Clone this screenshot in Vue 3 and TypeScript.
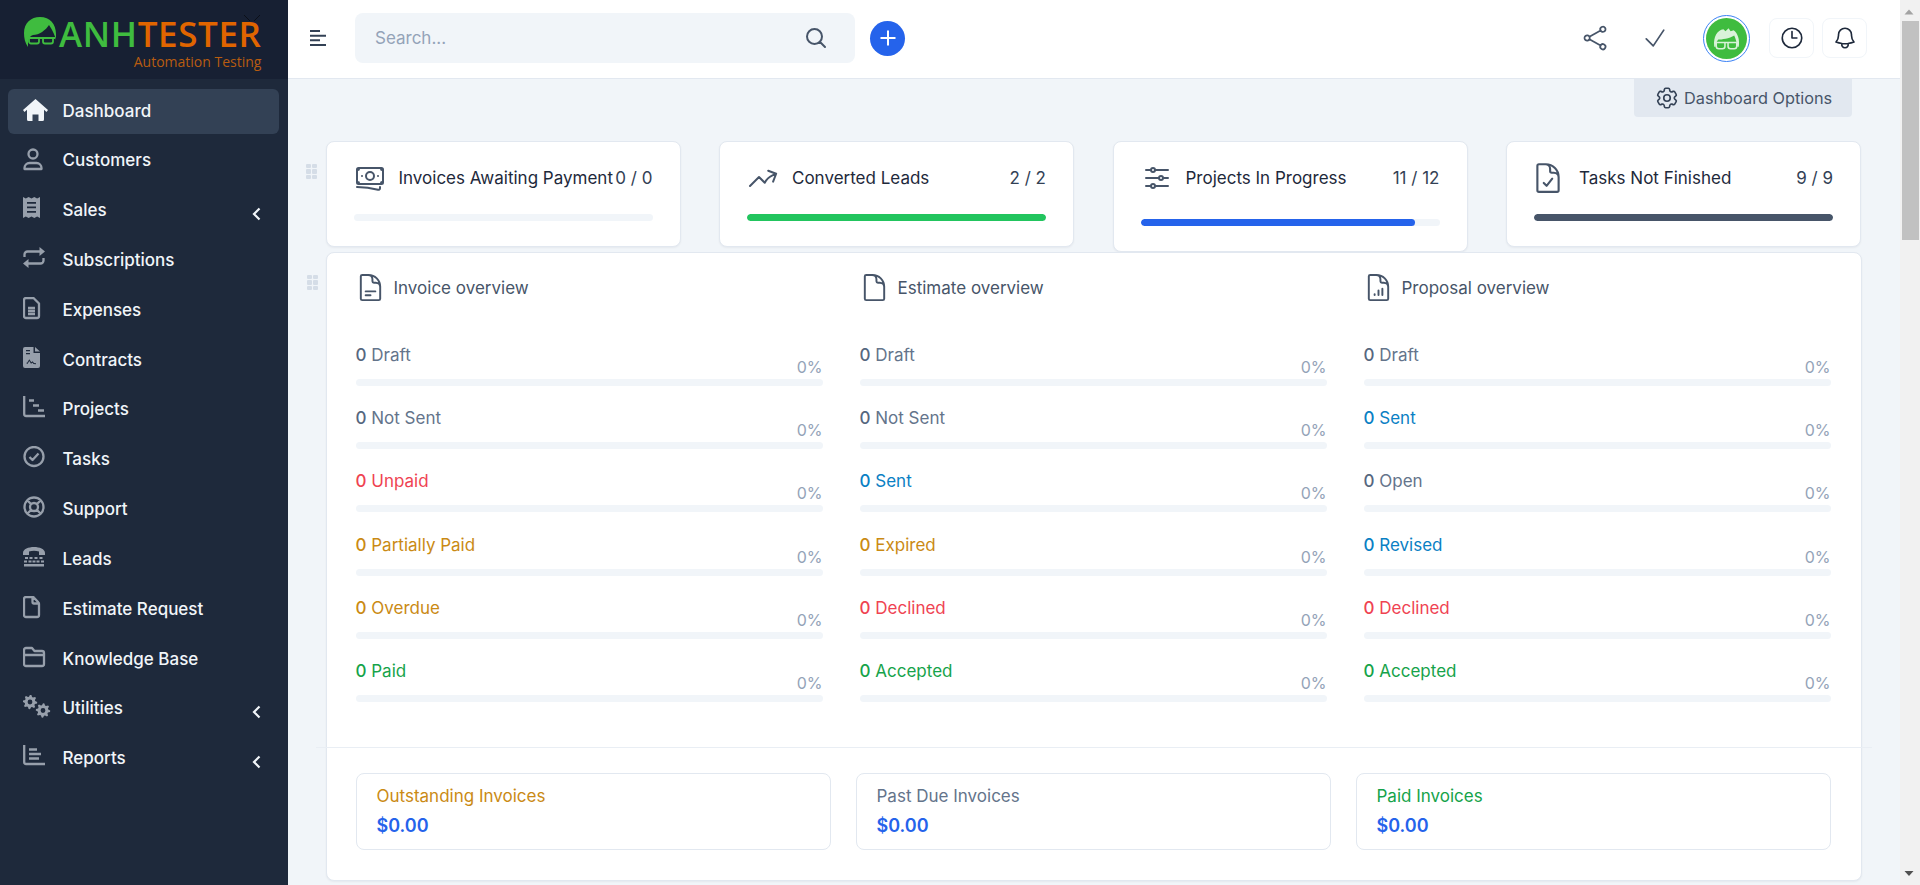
<template>
  <div class="app">
    <aside class="sidebar">
      <div class="brand">
        <svg class="brand-head" width="34" height="32" viewBox="0 0 34 32">
          <path class="head-hair" d="M0 17C0 7 7 1 16 1c10 0 16 7 16 17v6c-1-4-3-9-7-15-3 5-10 10-16 10-3 1-5 4-5 8v4C1 27 0 22 0 17z" />
          <path class="head-glass" d="M4 22h27M5 22h10v3.500a2 2 0 0 1-2 2H7a2 2 0 0 1-2-2zM19 22h10v3.500a2 2 0 0 1-2 2h-6a2 2 0 0 1-2-2z" />
        </svg>
        <div class="brand-text">
          <div class="brand-name"><span class="green">ANH</span><span class="orange">TESTER</span></div>
          <div class="brand-sub">Automation Testing</div>
        </div>
        <svg class="brand-bug" width="22" height="12" viewBox="0 0 22 12">
          <path d="M9 7 3 1M13 7l6-6" />
        </svg>
      </div>
      <nav class="menu">
        <a v-for="item in menu" :key="item.label" class="menu-item" :class="{ active: item.active }">
          <svg class="menu-icon" width="28" height="28" viewBox="0 0 28 28">
            <path v-if="item.fill" class="i-fill" fill-rule="evenodd" :d="item.fill" />
            <path v-if="item.stroke" class="i-stroke" :d="item.stroke" />
          </svg>
          <span class="menu-label">{{ item.label }}</span>
          <svg v-if="item.sub" class="chevron" width="9" height="14" viewBox="0 0 9 14">
            <path d="M7.500 1.500 2 7l5.500 5.500" />
          </svg>
        </a>
      </nav>
    </aside>

    <div class="main">
      <header class="topbar">
        <svg class="burger" width="16" height="16" viewBox="0 0 16 16">
          <path d="M0 1h10M0 5.700h16M0 10.300h10M0 15h16" />
        </svg>
        <div class="search">
          <span class="search-text">Search...</span>
          <svg class="hero search-icon" width="24" height="24" viewBox="0 0 24 24">
            <path :d="icons.search" />
          </svg>
        </div>
        <button class="plus">
          <svg width="20" height="20" viewBox="0 0 20 20"><path d="M10 2.500v15M2.500 10h15" /></svg>
        </button>
        <div class="top-right">
          <svg class="hero top-icon share" width="28" height="28" viewBox="0 0 24 24"><path :d="icons.share" /></svg>
          <svg class="hero top-icon check" width="28" height="28" viewBox="0 0 24 24"><path :d="icons.check" /></svg>
          <div class="avatar">
            <svg width="41" height="41" viewBox="0 0 40 40">
              <circle class="avatar-bg" cx="20" cy="20" r="20" />
              <path class="avatar-hair" d="M8 28C7 18 11 12 17 11l2 2 3-3 2 3 3-1c4 3 6 9 5 16h-1.500c-.5-4-1.500-8-3-11-4.500 3-12.500 4-15.500 4-2 2-2.500 5-2.500 7z" />
              <path class="avatar-glass" d="M8 24h24M10 24h8.500v3.500a2.500 2.500 0 0 1-2.500 2.500h-3.500a2.500 2.500 0 0 1-2.500-2.500zM21.500 24H30v3.500a2.500 2.500 0 0 1-2.500 2.500H24a2.500 2.500 0 0 1-2.500-2.500z" />
            </svg>
          </div>
          <div class="round-box">
            <svg class="hero dark" width="26" height="26" viewBox="0 0 24 24"><path :d="icons.clock" /></svg>
          </div>
          <div class="round-box">
            <svg class="hero dark" width="26" height="26" viewBox="0 0 24 24"><path :d="icons.bell" /></svg>
          </div>
        </div>
      </header>

      <div class="options-row">
        <button class="options">
          <svg class="hero options-icon" width="26" height="26" viewBox="0 0 24 24"><path :d="icons.cog" /></svg>
          Dashboard Options
        </button>
      </div>

      <section class="content">
        <div class="top-cards">
          <span class="drag drag-top"><i v-for="n in 6" :key="n" /></span>
          <div v-for="card in cards" :key="card.title" class="stat-card" :class="{ tall: card.tall, doc: card.doc }">
            <div class="stat-head">
              <span class="stat-icon">
                <svg class="hero card-icon" :width="card.size" :height="card.size" viewBox="0 0 24 24"><path :d="card.icon" /></svg>
              </span>
              <span class="stat-title">{{ card.title }}</span>
              <span class="stat-value">{{ card.value }}</span>
            </div>
            <div class="track"><div class="fill" :class="card.color" :style="{ width: card.pct + '%' }" /></div>
          </div>
        </div>

        <div class="overview">
          <span class="drag drag-over"><i v-for="n in 6" :key="n" /></span>
          <div class="columns">
            <div v-for="col in overview" :key="col.title" class="column">
              <div class="col-title">
                <svg class="hero col-icon" width="31" height="31" viewBox="0 0 24 24"><path :d="col.icon" /></svg>
                {{ col.title }}
              </div>
              <div v-for="row in col.rows" :key="row.label" class="row">
                <span class="row-label" :class="row.tone"><b>0</b> {{ row.label }}</span>
                <span class="row-pct">0%</span>
                <div class="track row-track" />
              </div>
            </div>
          </div>
          <hr class="divider" />
          <div class="totals">
            <div v-for="t in totals" :key="t.label" class="total">
              <div class="total-label" :class="t.tone">{{ t.label }}</div>
              <div class="total-value">$0.00</div>
            </div>
          </div>
        </div>
      </section>
    </div>

    <div class="scrollbar">
      <svg class="arrow" width="20" height="17" viewBox="0 0 20 17"><path d="M9 9.500l4.500 5h-9z" /></svg>
      <div class="thumb" />
      <svg class="arrow bottom" width="20" height="17" viewBox="0 0 20 17"><path d="M9 8l4.500-5h-9z" /></svg>
    </div>
  </div>
</template>

<script setup lang="ts">
interface MenuItem {
  label: string
  fill?: string
  stroke?: string
  sub?: boolean
  active?: boolean
}

// builds a small gear with a hole, for the Utilities icon
function gear(cx: number, cy: number, r: number, hole: number): string {
  const pts: string[] = []
  const teeth = 8
  for (let i = 0; i < teeth * 4; i++) {
    const a = (i / (teeth * 4)) * Math.PI * 2
    const rad = i % 4 < 2 ? r : r * 0.74
    pts.push(`${(cx + Math.cos(a) * rad).toFixed(2)} ${(cy + Math.sin(a) * rad).toFixed(2)}`)
  }
  return (
    `M${pts.join('L')}Z` +
    `M${cx - hole} ${cy}a${hole} ${hole} 0 1 0 ${hole * 2} 0a${hole} ${hole} 0 1 0 ${-hole * 2} 0Z`
  )
}

const menu: MenuItem[] = [
  {
    label: 'Dashboard',
    active: true,
    fill: 'M12.500 1 25 12l-1.500 2L21 11.800V21.500a1.500 1.500 0 0 1-1.500 1.500H15.500V16.500H9.500V23H5.500A1.500 1.500 0 0 1 4 21.500V11.800L1.500 14 0 12Z',
  },
  {
    label: 'Customers',
    stroke: 'M14.500 7a4.500 4.500 0 1 1-9 0 4.500 4.500 0 0 1 9 0ZM1.500 22v-1a5 5 0 0 1 5-5h7a5 5 0 0 1 5 5v1Z',
  },
  {
    label: 'Sales',
    sub: true,
    fill: 'M0 0 2.800 1.500 5.600 0 8.500 1.500 11.300 0 14.100 1.500 17 0V21L14.100 19.500 11.300 21 8.500 19.500 5.600 21 2.800 19.500 0 21ZM4 5v1.700h9V5ZM4 9.500v1.700h9V9.500ZM4 14v1.700h9V14Z',
  },
  {
    label: 'Subscriptions',
    fill: 'M16.500 0 22 4.500 16.500 9ZM5.500 12 0 16.500 5.500 21Z',
    stroke: 'M1.500 10V7.500a3 3 0 0 1 3-3H17M20.500 11v2.500a3 3 0 0 1-3 3H5',
  },
  {
    label: 'Expenses',
    stroke: 'M3 1h7.500L16 6.500V19a2 2 0 0 1-2 2H3a2 2 0 0 1-2-2V3a2 2 0 0 1 2-2ZM5 11h7M5 14h7M5 17h7',
  },
  {
    label: 'Contracts',
    fill: 'M2 0H10.500V6H17V19a2 2 0 0 1-2 2H2a2 2 0 0 1-2-2V2a2 2 0 0 1 2-2ZM3 3v1.300H7V3ZM3 6v1.300H7V6ZM3.500 16.500l1 .6 1.800-3 1.700 2.600 1.500-1 1 1.300 2.500.2v-1l-2-.2-1.400-1.700-1.300.9-2-3-2.200 3.600-.4-.3ZM12 0 17 4.500H12Z',
  },
  {
    label: 'Projects',
    stroke: 'M1.200 0V18a2 2 0 0 0 2 2H22M6 4.500h5M10 9.500h6M15 14.500h6',
  },
  {
    label: 'Tasks',
    stroke: 'M20.500 10.500a9.500 9.500 0 1 1-19 0 9.500 9.500 0 0 1 19 0ZM6.500 11l3 3 6-6.500',
  },
  {
    label: 'Support',
    stroke: 'M20.500 11a9.500 9.500 0 1 1-19 0 9.500 9.500 0 0 1 19 0ZM15 11a4 4 0 1 1-8 0 4 4 0 0 1 8 0ZM4.500 4.500 8 8M17.500 4.500 14 8M4.500 17.500 8 14M17.500 17.500 14 14',
  },
  {
    label: 'Leads',
    fill: 'M0 7C0 -1 22 -1 22 7v2h-6V5.500c-3-1-7-1-10 0V9H0ZM2 11h3v2H2ZM6.500 11h3v2h-3ZM11.500 11h3v2h-3ZM16.500 11h3v2h-3ZM1 14.500h3v2H1ZM5.500 14.500h3v2h-3ZM9.500 14.500h3v2h-3ZM13.500 14.500h3v2h-3ZM18 14.500h3v2h-3ZM1 18h20v2.500H1Z',
  },
  {
    label: 'Estimate Request',
    stroke: 'M3 1h6.500a2 2 0 0 1 1.500.7l4.300 4.600a2 2 0 0 1 .7 1.500V19a2 2 0 0 1-2 2H3a2 2 0 0 1-2-2V3a2 2 0 0 1 2-2ZM9.500 1v5a1.500 1.500 0 0 0 1.500 1.500h5',
  },
  {
    label: 'Knowledge Base',
    stroke: 'M3 2h6l2.500 3H19a2 2 0 0 1 2 2v11a2 2 0 0 1-2 2H3a2 2 0 0 1-2-2V4a2 2 0 0 1 2-2ZM1 9h20',
  },
  {
    label: 'Utilities',
    sub: true,
    fill: gear(7, 7, 7.2, 2.4) + gear(20, 15.5, 7.2, 2.4),
  },
  {
    label: 'Reports',
    sub: true,
    stroke: 'M1.200 0V17a2 2 0 0 0 2 2H22M6 4.500h8M6 9h12M6 13.500h10',
  },
]

const docBase =
  'M19.500 14.250v-2.625a3.375 3.375 0 0 0-3.375-3.375h-1.500A1.125 1.125 0 0 1 13.500 7.125v-1.500a3.375 3.375 0 0 0-3.375-3.375H8.250m2.250 0H5.625c-.621 0-1.125.504-1.125 1.125v17.250c0 .621.504 1.125 1.125 1.125h12.750c.621 0 1.125-.504 1.125-1.125V11.250a9 9 0 0 0-9-9z'

const icons = {
  search: 'M21 21l-5.197-5.197m0 0A7.500 7.500 0 1 0 5.196 5.196a7.500 7.500 0 0 0 10.607 10.607z',
  share:
    'M7.217 10.907a2.250 2.250 0 1 0 0 2.186m0-2.186c.18.324.283.696.283 1.093s-.103.77-.283 1.093m0-2.186l9.566-5.314m-9.566 7.500l9.566 5.314m0 0a2.250 2.250 0 1 0 3.935 2.186 2.250 2.250 0 0 0-3.935-2.186zm0-12.814a2.250 2.250 0 1 0 3.933-2.185 2.250 2.250 0 0 0-3.933 2.185z',
  check: 'M4.500 12.750l6 6 9-13.500',
  clock: 'M12 6v6h4.500m4.500 0a9 9 0 1 1-18 0 9 9 0 0 1 18 0z',
  bell: 'M14.857 17.082a23.848 23.848 0 0 0 5.454-1.310A8.967 8.967 0 0 1 18 9.750v-.7V9A6 6 0 0 0 6 9v.750a8.967 8.967 0 0 1-2.312 6.022c1.733.64 3.560 1.085 5.455 1.310m5.714 0a24.255 24.255 0 0 1-5.714 0m5.714 0a3 3 0 1 1-5.714 0',
  cog: 'M9.594 3.940c.09-.542.56-.94 1.110-.94h2.593c.55 0 1.020.398 1.110.94l.213 1.281c.063.374.313.686.645.87.074.04.147.083.22.127.324.196.72.257 1.075.124l1.217-.456a1.125 1.125 0 0 1 1.370.49l1.296 2.247a1.125 1.125 0 0 1-.26 1.431l-1.003.827c-.293.24-.438.613-.431.992a6.759 6.759 0 0 1 0 .255c-.007.378.138.75.43.99l1.005.828c.424.35.534.954.26 1.430l-1.298 2.247a1.125 1.125 0 0 1-1.369.491l-1.217-.456c-.355-.133-.75-.072-1.076.124a6.570 6.570 0 0 1-.22.128c-.331.183-.581.495-.644.869l-.213 1.280c-.09.543-.56.941-1.110.941h-2.594c-.55 0-1.020-.398-1.110-.94l-.213-1.281c-.062-.374-.312-.686-.644-.87a6.520 6.520 0 0 1-.22-.127c-.325-.196-.72-.257-1.076-.124l-1.217.456a1.125 1.125 0 0 1-1.369-.49l-1.297-2.247a1.125 1.125 0 0 1 .26-1.431l1.004-.827c.292-.24.437-.613.43-.992a6.932 6.932 0 0 1 0-.255c.007-.378-.138-.75-.43-.99l-1.004-.828a1.125 1.125 0 0 1-.26-1.430l1.297-2.247a1.125 1.125 0 0 1 1.370-.491l1.216.456c.356.133.751.072 1.076-.124.072-.044.146-.087.22-.128.332-.183.582-.495.644-.869l.214-1.281zM15 12a3 3 0 1 1-6 0 3 3 0 0 1 6 0z',
}

const cards = [
  {
    title: 'Invoices Awaiting Payment',
    value: '0 / 0',
    pct: 0,
    color: 'gray',
    size: 32,
    icon: 'M2.250 18.750a60.070 60.070 0 0 1 15.797 2.101c.727.198 1.453-.342 1.453-1.096V18.750M3.750 4.500v.75A.75.75 0 0 1 3 6h-.75m0 0v-.375c0-.621.504-1.125 1.125-1.125H20.250M2.250 6v9m18-10.500v.75c0 .414.336.75.75.75h.75m-1.500-1.500h.375c.621 0 1.125.504 1.125 1.125v9.750c0 .621-.504 1.125-1.125 1.125h-.375m1.500-1.500H21a.75.75 0 0 0-.75.75v.75m0 0H3.750m0 0h-.375a1.125 1.125 0 0 1-1.125-1.125V15m1.500 1.500v-.75A.75.75 0 0 0 3 15h-.75M15 10.500a3 3 0 1 1-6 0 3 3 0 0 1 6 0zm3 0h.008v.008H18V10.500zm-12 0h.008v.008H6V10.500z',
  },
  {
    title: 'Converted Leads',
    value: '2 / 2',
    pct: 100,
    color: 'green',
    size: 32,
    icon: 'M2.250 18L9 11.250l4.306 4.307a11.950 11.950 0 0 1 5.814-5.519l2.740-1.220m0 0l-5.940-2.280m5.940 2.280l-2.280 5.941',
  },
  {
    title: 'Projects In Progress',
    value: '11 / 12',
    pct: 91.67,
    color: 'blue',
    size: 32,
    tall: true,
    icon: 'M10.500 6h9.750M10.500 6a1.500 1.500 0 1 1-3 0m3 0a1.500 1.500 0 1 0-3 0M3.750 6H7.500m3 12h9.750m-9.750 0a1.500 1.500 0 0 1-3 0m3 0a1.500 1.500 0 0 0-3 0m-3.750 0H7.500m9-6h3.750m-3.750 0a1.500 1.500 0 0 1-3 0m3 0a1.500 1.500 0 0 0-3 0m-9.750 0h9.750',
  },
  {
    title: 'Tasks Not Finished',
    value: '9 / 9',
    pct: 100,
    color: 'slate',
    size: 34,
    doc: true,
    icon: docBase + 'M9 15.500l2 2 4-5',
  },
]

const overview = [
  {
    title: 'Invoice overview',
    icon: docBase + 'M8.250 15h7.500M8.250 18H12',
    rows: [
      { label: 'Draft', tone: 'muted' },
      { label: 'Not Sent', tone: 'muted' },
      { label: 'Unpaid', tone: 'danger' },
      { label: 'Partially Paid', tone: 'warning' },
      { label: 'Overdue', tone: 'warning' },
      { label: 'Paid', tone: 'success' },
    ],
  },
  {
    title: 'Estimate overview',
    icon: docBase,
    rows: [
      { label: 'Draft', tone: 'muted' },
      { label: 'Not Sent', tone: 'muted' },
      { label: 'Sent', tone: 'info' },
      { label: 'Expired', tone: 'warning' },
      { label: 'Declined', tone: 'danger' },
      { label: 'Accepted', tone: 'success' },
    ],
  },
  {
    title: 'Proposal overview',
    icon: docBase + 'M9 17.250v.5m3-3.500v3.500M15 13v4.750',
    rows: [
      { label: 'Draft', tone: 'muted' },
      { label: 'Sent', tone: 'info' },
      { label: 'Open', tone: 'muted' },
      { label: 'Revised', tone: 'info' },
      { label: 'Declined', tone: 'danger' },
      { label: 'Accepted', tone: 'success' },
    ],
  },
]

const totals = [
  { label: 'Outstanding Invoices', tone: 'warning' },
  { label: 'Past Due Invoices', tone: 'muted' },
  { label: 'Paid Invoices', tone: 'success' },
]
</script>

<style>
html,
body {
  margin: 0;
  overflow: hidden;
}
</style>

<style scoped>
.app {
  display: flex;
  width: 1920px;
  height: 885px;
  overflow: hidden;
  background: #f1f5f9;
  font-family: Inter, "Liberation Sans", sans-serif;
  font-size: 17px;
  color: #334155;
}

/* sidebar */
.sidebar {
  flex: 0 0 288px;
  background: #1e293b;
}

.brand {
  position: relative;
  display: flex;
  gap: 1px;
  height: 79px;
  padding: 16px 0 0 24px;
  box-sizing: border-box;
  background: #172033;
}

.brand-head {
  flex: none;
}

.head-hair {
  fill: #3fbc3f;
}

.head-glass {
  fill: none;
  stroke: #3fbc3f;
  stroke-width: 1.800;
}

.brand-text {
  display: flex;
  flex-direction: column;
  align-items: flex-end;
}

.brand-name {
  font-family: "Open Sans", sans-serif;
  font-size: 35px;
  font-weight: 600;
  line-height: 36px;
  letter-spacing: 0.600px;
}

.green {
  color: #3fbc3f;
}

.orange {
  color: #e06500;
}

.brand-sub {
  font-family: "Open Sans", sans-serif;
  font-size: 14px;
  line-height: 20px;
  color: #b85c10;
}

.brand-bug {
  position: absolute;
  top: 14px;
  left: 241px;
}

.brand-bug path {
  fill: none;
  stroke: #0b0f18;
  stroke-width: 1;
}

.menu {
  display: flex;
  flex-direction: column;
  gap: 4.830px;
  padding: 10px 9px 0 8px;
}

.menu-item {
  display: flex;
  align-items: center;
  height: 45px;
  padding: 0 18px 0 15px;
  border-radius: 6px;
  color: #f1f5f9;
  font-weight: 500;
}

.menu-item.active {
  background: #334155;
}

.menu-icon {
  flex: none;
  margin-right: 11.500px;
}

.i-fill {
  fill: #979fab;
}

.i-stroke {
  fill: none;
  stroke: #979fab;
  stroke-width: 2.300;
  stroke-linejoin: round;
}

.active .i-fill {
  fill: #f1f5f9;
}

.menu-label {
  flex: 1;
  margin-top: -2px;
}

.chevron {
  margin-top: 6px;
}

.chevron path {
  fill: none;
  stroke: #f1f5f9;
  stroke-width: 2.200;
}

/* top bar */
.main {
  flex: 0 0 1612px;
  min-width: 0;
}

.topbar {
  display: flex;
  align-items: center;
  height: 79px;
  padding: 0 33px 2px 22px;
  box-sizing: border-box;
  background: #fff;
  border-bottom: 1px solid #e2e8f0;
}

.burger path {
  fill: none;
  stroke: #334155;
  stroke-width: 2;
}

.hero {
  fill: none;
  stroke: #475569;
  stroke-width: 1.500;
  stroke-linecap: round;
  stroke-linejoin: round;
}

.search {
  display: flex;
  align-items: center;
  justify-content: space-between;
  width: 500px;
  height: 50px;
  margin-left: 29px;
  padding: 0 27px 0 20px;
  box-sizing: border-box;
  background: #f1f5f9;
  border-radius: 8px;
}

.search-text {
  color: #94a3b8;
}

.search-icon {
  stroke-width: 2;
}

.plus {
  display: flex;
  align-items: center;
  justify-content: center;
  width: 35px;
  height: 35px;
  margin-left: 15px;
  padding: 0;
  border: 0;
  border-radius: 50%;
  background: #2563eb;
}

.plus path {
  stroke: #fff;
  stroke-width: 2;
}

.top-right {
  display: flex;
  align-items: center;
  margin-left: auto;
}

.top-icon {
  flex: none;
}

.check {
  margin-left: 32px;
}

.avatar {
  display: flex;
  align-items: center;
  justify-content: center;
  width: 47px;
  height: 47px;
  margin: 0 19px 0 34px;
  box-sizing: border-box;
  border: 1.500px solid #3b82f6;
  border-radius: 50%;
}

.avatar-bg {
  fill: #3fbc3f;
}

.avatar-hair {
  fill: #d9f2d9;
}

.avatar-glass {
  fill: none;
  stroke: #d9f2d9;
  stroke-width: 1.500;
}

.round-box {
  display: flex;
  align-items: center;
  justify-content: center;
  width: 45px;
  height: 40px;
  box-sizing: border-box;
  border: 1px solid #f1f5f9;
  border-radius: 8px;
}

.round-box + .round-box {
  margin-left: 8px;
}

.dark {
  stroke: #1e293b;
}

.options-row {
  display: flex;
  justify-content: flex-end;
  padding-right: 48px;
}

.options {
  display: flex;
  align-items: center;
  gap: 4px;
  width: 218px;
  height: 38px;
  padding: 0 0 0 20px;
  border: 0;
  border-radius: 0 0 4px 4px;
  background: #e2e8f0;
  color: #475569;
  font: inherit;
  font-size: 16.300px;
}

.options-icon {
  flex: none;
  stroke: #334155;
}

/* content */
.content {
  padding: 23.500px 38.500px 0 37.500px;
}

.top-cards {
  position: relative;
  display: grid;
  grid-template-columns: repeat(4, 355px);
  column-gap: 38.500px;
  align-items: start;
}

.drag {
  position: absolute;
  display: grid;
  grid-template-columns: repeat(2, 5px);
  gap: 1px;
}

.drag i {
  height: 4.500px;
  border-radius: 1px;
  background: #d5dde7;
}

.drag-top {
  top: 23px;
  left: -20px;
}

.drag-over {
  top: 22px;
  left: -20px;
}

.stat-card {
  padding: 23px 27px 25px;
  background: #fff;
  border: 1px solid #e2e8f0;
  border-radius: 8px;
  box-shadow: 0 1px 2px rgba(15, 23, 42, 0.05);
  box-sizing: border-box;
}

.stat-head {
  display: flex;
  align-items: center;
  height: 26px;
  margin-bottom: 23px;
}

.tall .stat-head {
  margin-bottom: 28px;
}

.stat-icon {
  display: flex;
  flex: 0 0 45px;
  align-items: center;
}

.card-icon {
  flex: none;
}

.doc .card-icon {
  margin-left: -3px;
}

.stat-title {
  flex: 1;
  color: #1e293b;
  font-weight: 400;
  white-space: nowrap;
}

.stat-value {
  color: #334155;
  font-weight: 400;
}

.track {
  height: 7px;
  border-radius: 4px;
  background: #f1f5f9;
  overflow: hidden;
}

.fill {
  height: 100%;
  border-radius: 4px;
}

.fill.green {
  background: #22c55e;
}

.fill.blue {
  background: #2563eb;
}

.fill.slate {
  background: #475569;
}

.overview {
  position: relative;
  height: 629px;
  padding: 21px 0 0;
  box-sizing: border-box;
  background: #fff;
  border: 1px solid #e2e8f0;
  border-radius: 8px;
  box-shadow: 0 1px 2px rgba(15, 23, 42, 0.05);
}

.columns {
  display: grid;
  grid-template-columns: repeat(3, 467px);
  justify-content: space-between;
  padding: 0 30px 0 29px;
}

.col-title {
  display: flex;
  align-items: center;
  gap: 8px;
  height: 28px;
  margin: 0 0 41px -1px;
  color: #475569;
  font-weight: 400;
}

.row {
  display: grid;
  grid-template-columns: 1fr auto;
  margin-bottom: 20.400px;
  line-height: 24px;
}

.row-label b {
  font-weight: 500;
}

.row-pct {
  padding-top: 12px;
  color: #94a3b8;
  font-size: 16px;
}

.row-track {
  grid-column: 1 / 3;
}

.muted {
  color: #64748b;
}

.muted b {
  color: #56677f;
}

.danger {
  color: #ef4352;
}

.warning {
  color: #ca8a14;
}

.info {
  color: #0a80c4;
}

.success {
  color: #16a34a;
}

.divider {
  height: 1px;
  margin: 24px -11px 25px;
  border: 0;
  background: #e9eef4;
}

.totals {
  display: grid;
  grid-template-columns: repeat(3, 475px);
  justify-content: space-between;
  padding: 0 30px 0 29px;
}

.total {
  height: 77px;
  padding: 10px 20px;
  box-sizing: border-box;
  border: 1px solid #e2e8f0;
  border-radius: 8px;
  line-height: 24px;
}

.total-value {
  margin-top: 6px;
  color: #2563eb;
  font-size: 18px;
  font-weight: 600;
}

/* fake browser scrollbar, the page itself is fixed to the window */
.scrollbar {
  position: absolute;
  top: 0;
  right: 0;
  bottom: 0;
  width: 20px;
  background: #f1f1f1;
}

.arrow {
  display: block;
}

.arrow path {
  fill: #a3a3a3;
}

.arrow.bottom {
  position: absolute;
  bottom: 0;
}

.arrow.bottom path {
  fill: #505050;
}

.thumb {
  width: 17px;
  height: 219px;
  margin: 4px 0 0 2px;
  background: #c1c1c1;
}
</style>
